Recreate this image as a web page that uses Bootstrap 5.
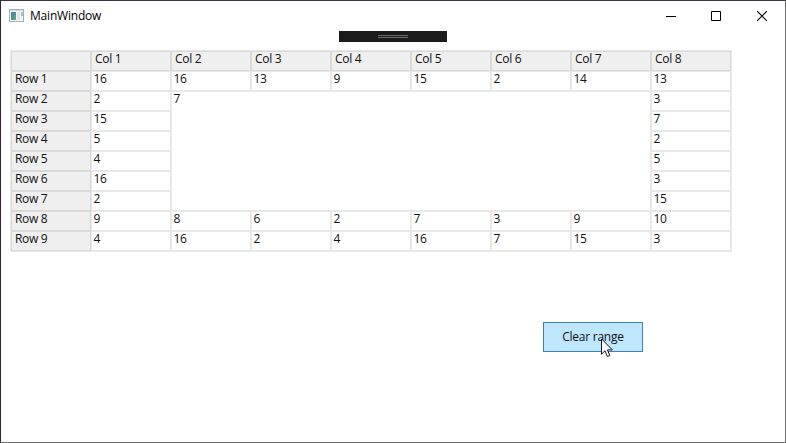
<!DOCTYPE html>
<html lang="en">
<head>
<meta charset="utf-8">
<meta name="viewport" content="width=device-width, initial-scale=1">
<title>MainWindow</title>
<link href="https://cdn.jsdelivr.net/npm/bootstrap@5.3.0/dist/css/bootstrap.min.css" rel="stylesheet">
<style>
  body { height: 443px; overflow: hidden; font: 12px/16px "Open Sans", "Noto Sans", sans-serif; letter-spacing: -.3px; color: #111; }
  .app-window { height: 443px; border: 1px solid #2c2636; border-top-color: #3b3444; border-right-color: #6a6a6a; border-bottom-color: #6e6e6e; }
  .title-bar { height: 29px; padding-left: 8px; }
  .title-text { margin: 1px 0 0 6px; color: #000; letter-spacing: -.2px; }
  .caption-btn { width: 46px; height: 29px; line-height: 0; background: none; border: 0; padding: 0; }
  .caption-btn:first-child { width: 45px; }
  .debug-bar { width: 108px; height: 11px; margin: 1px 0 0 338px; background: #1b1b1b; }
  .debug-grip { width: 30px; height: 3px; border: solid #6b6b6b; border-width: 1px 0; }
  .sheet { display: grid; grid-template-columns: repeat(9, 80px); grid-auto-rows: 20px; width: 722px; margin: 8px 0 0 9px; border: 1px solid #e8e8e8; }
  .sheet > div { border: 1px solid rgba(0,0,0,.09); padding: 0 0 0 1.5px; line-height: 13px; white-space: nowrap; }
  .sheet > .head { background: #efefef; padding-left: 3px; }
  .sheet > .merged { grid-column: 3 / span 6; grid-row: 3 / span 6; }
  .clear-btn { width: 100px; height: 30px; margin: 70px 0 0 542px; background: #bee6fd; border: 1px solid #3c7fb1; border-radius: 0; font-size: 12px; line-height: 16px; color: #111; letter-spacing: -.25px; }
  .pointer { left: 57px; top: 15px; }
</style>
<script src="https://cdn.jsdelivr.net/npm/bootstrap@5.3.0/dist/js/bootstrap.bundle.min.js"></script>
</head>
<body class="bg-white">
<main class="app-window bg-white">
  <header class="title-bar d-flex align-items-center">
    <svg width="15" height="13" viewBox="0 0 15 13" aria-hidden="true">
      <defs><linearGradient id="pane" x1="0" y1="0" x2="1" y2="1"><stop stop-color="#4c77a9"/><stop offset="1" stop-color="#59ad80"/></linearGradient></defs>
      <rect x=".5" y=".5" width="14" height="12" fill="#f3f4f6" stroke="#a9aeb5"/>
      <path d="M1 1.5H14" stroke="#d5d9de"/>
      <rect x="2" y="3" width="5" height="8" fill="url(#pane)"/>
      <rect x="8" y="3" width="3" height="8" fill="#e2e5e9"/>
      <rect x="12" y="3" width="2" height="4" fill="#9cc6bd"/>
    </svg>
    <span class="title-text">MainWindow</span>
    <div class="d-flex ms-auto me-0">
      <button class="caption-btn" aria-label="Minimize"><svg width="10" height="10"><path d="M0 5.5H10" stroke="#000"/></svg></button>
      <button class="caption-btn" aria-label="Maximize"><svg width="10" height="10"><path d="M.5.5H9.5V9.5H.5Z" fill="none" stroke="#000"/></svg></button>
      <button class="caption-btn" aria-label="Close"><svg width="10" height="10"><path d="M0 0L10 10M10 0L0 10" stroke="#000" stroke-width="1.1"/></svg></button>
    </div>
  </header>
  <div class="debug-bar d-flex align-items-center justify-content-center"><div class="debug-grip"></div></div>
  <section class="sheet" id="sheet"></section>
  <button class="clear-btn btn p-0 d-block position-relative">Clear range
    <svg class="pointer position-absolute" width="13" height="20" viewBox="0 0 13 20" aria-hidden="true"><path d="M.5 .9V16.2L4 12.8L6.4 18.5L8.8 17.5L6.4 11.9H11.4Z" fill="#fff" stroke="#101828"/></svg>
  </button>
</main>
<script>
  const rows = [
    [16, 16, 13, 9, 15, 2, 14, 13],
    [2, 7, 3], [15, 7], [5, 2], [4, 5], [16, 3], [2, 15],
    [9, 8, 6, 2, 7, 3, 9, 10],
    [4, 16, 2, 4, 16, 7, 15, 3]
  ];
  const sheet = document.getElementById('sheet');
  function addCell(text, cls) {
    const cell = document.createElement('div');
    cell.textContent = text;
    if (cls) cell.className = cls;
    sheet.appendChild(cell);
  }
  addCell('', 'head');
  for (let c = 1; c <= 8; c++) addCell('Col ' + c, 'head');
  rows.forEach((values, r) => {
    addCell('Row ' + (r + 1), 'head');
    values.forEach((v, c) => addCell(v, r === 1 && c === 1 ? 'merged' : ''));
  });
</script>
</body>
</html>
